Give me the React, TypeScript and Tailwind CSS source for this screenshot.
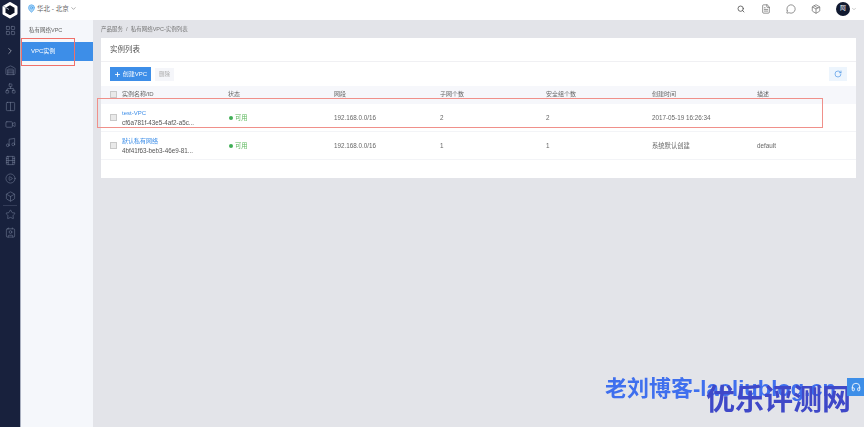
import { Box, ChevronDown, ChevronRight, CirclePlay, Contact, FileText, Headphones, LayoutGrid, MapPin, MessageCircle, Music, Network, Package, Plus, RotateCw, Search, Star, Video, Warehouse, Columns2, Film } from 'lucide-react';

const sans = 'font-["Liberation_Sans","Noto_Sans_CJK_SC",sans-serif]';

const navIcons = [Warehouse, Network, Columns2, Video, Music, Film, CirclePlay, Box];

const rows = [
  { name: 'test-VPC', id: 'cf6a781f-43e5-4af2-a5c...', net: '192.168.0.0/16', subnet: '2', sg: '2', time: '2017-05-19 16:26:34', desc: '' },
  { name: '默认私有网络', id: '4bf41f63-beb3-46e9-81...', net: '192.168.0.0/16', subnet: '1', sg: '1', time: '系统默认创建', desc: 'default' },
];

const gridCols = 'grid grid-cols-[12px_106px_106px_106px_106px_106px_105px_1fr] items-center';

function Logo() {
  return (
    <svg viewBox="0 0 20 20" className="w-5 h-5">
      <path d="M10 3.5 L16 7 V13.5 L10 17 L4 13.5 V7 Z" fill="#0c1224" stroke="#ffffff" strokeWidth="3" strokeLinejoin="round" />
      <path d="M3 6 L9 9.5" stroke="#aab0bf" strokeWidth="1" />
    </svg>
  );
}

function Check() {
  return <div className="w-[7px] h-[7px] border border-[#c9c9c9] bg-[#e9e9e9]" />;
}

export default function App() {
  return (
    <div className={`relative flex w-[864px] h-[427px] overflow-hidden bg-[#e3e4e9] ${sans}`}>
      {/* 왼쪽 아이콘 바 */}
      <aside className="w-[21px] shrink-0 bg-[#18213d] border-r border-[#aab0c0] flex flex-col items-center text-[#76809a] blur-[0.3px]">
        <div className="h-5 flex items-center justify-center"><Logo /></div>
        <div className="mt-[5px] h-[10px] flex items-center"><LayoutGrid size={11} strokeWidth={1.2} /></div>
        <div className="mt-[11px] h-[10px] flex items-center text-[#c5cad6]"><ChevronRight size={10} strokeWidth={1.5} /></div>
        <div className="mt-[1px] flex flex-col">
          {navIcons.map((Icon, i) => (
            <div key={i} className="mt-2 h-[10px] flex items-center"><Icon size={11} strokeWidth={1.2} /></div>
          ))}
        </div>
        <div className="w-[14px] h-px bg-[#343d59] mt-1" />
        <div className="mt-[3px] h-[10px] flex items-center"><Star size={11} strokeWidth={1.2} /></div>
        <div className="mt-2 h-[10px] flex items-center"><Contact size={11} strokeWidth={1.2} /></div>
      </aside>

      <div className="flex-1 flex flex-col min-w-0 blur-[0.3px]">
        {/* 상단 바 */}
        <header className="h-5 shrink-0 bg-white flex items-center pl-[6px] pr-[7px] pb-[3px]">
          <MapPin size={9} className="text-[#3d9be9] fill-[#a8d4f7]" strokeWidth={1.5} />
          <span className="ml-[1px] text-[6.5px] text-[#666]">华北 - 北京</span>
          <ChevronDown size={7} className="ml-[1px] text-[#777]" />
          <div className="ml-auto flex items-center text-[#555]">
            <Search size={8} strokeWidth={2.5} />
            <FileText size={10} strokeWidth={1.5} className="ml-[16px]" />
            <MessageCircle size={10} strokeWidth={1.5} className="ml-[15px]" />
            <Package size={10} strokeWidth={1.5} className="ml-[15px]" />
            <div className="ml-[15px] w-[14px] h-[14px] rounded-full bg-[#111a30] text-white text-[6px] flex items-center justify-center">阿</div>
            <ChevronDown size={6} className="ml-[1px] text-[#999]" />
          </div>
        </header>

        <div className="flex-1 flex min-h-0">
          {/* 서브 메뉴 */}
          <nav className="w-[72px] shrink-0 bg-[#f5f7fb] pt-[2px] flex flex-col">
            <div className="h-5 pl-2 pb-1 flex items-center text-[5.5px] text-[#666]">私有网络VPC</div>
            <div className="h-[19px] pl-[10px] flex items-center text-[6px] text-white bg-[#3d8ee8]">VPC实例</div>
          </nav>

          <main className="flex-1 pl-2 pr-2 min-w-0">
            <div className="h-[18px] flex items-center text-[5.5px] text-[#777]">产品服务&nbsp;&nbsp;/&nbsp;&nbsp;私有网络VPC-实例列表</div>
            <section className="bg-white h-[140px] flex flex-col">
              <div className="h-6 shrink-0 pl-[9px] flex items-center text-[7.5px] text-[#555] border-b border-[#f0f0f3]">实例列表</div>
              <div className="h-6 shrink-0 px-[9px] flex items-center">
                <button className="w-[41px] h-[14px] bg-[#3d8ee8] text-white text-[6px] flex items-center justify-center gap-[2px]">
                  <Plus size={7} strokeWidth={3} />创建VPC
                </button>
                <button className="ml-1 w-[19px] h-[13px] bg-[#f5f6fa] text-[#aaa] text-[5.5px]">删除</button>
                <button className="ml-auto w-[18px] h-[14px] bg-[#edf5fd] text-[#4a94e6] flex items-center justify-center">
                  <RotateCw size={8} strokeWidth={2} />
                </button>
              </div>
              <div className={`${gridCols} h-[18px] shrink-0 pl-[9px] pb-[2px] bg-[#f6f7fb] text-[6px] text-[#666]`}>
                <Check />
                <span>实例名称/ID</span>
                <span>状态</span>
                <span>网段</span>
                <span>子网个数</span>
                <span>安全组个数</span>
                <span>创建时间</span>
                <span>描述</span>
              </div>
              {rows.map((r) => (
                <div key={r.name} className={`${gridCols} h-[28px] shrink-0 pl-[9px] border-b border-[#f3f4f7] text-[6.3px] text-[#666]`}>
                  <Check />
                  <div className="flex flex-col gap-[2px] leading-[8px]">
                    <span className="text-[#3d8ee8] text-[6px]">{r.name}</span>
                    <span className="text-[#555]">{r.id}</span>
                  </div>
                  <span className="flex items-center gap-[2px] pl-[1px] text-[#5cb85c]">
                    <span className="w-1 h-1 rounded-full bg-[#3fae55]" />可用
                  </span>
                  <span>{r.net}</span>
                  <span>{r.subnet}</span>
                  <span>{r.sg}</span>
                  <span>{r.time}</span>
                  <span>{r.desc}</span>
                </div>
              ))}
            </section>
          </main>
        </div>
      </div>

      {/* 빨간 표시 박스 */}
      <div className="absolute left-[21px] top-[38px] w-[54px] h-[28px] border border-[#f0706a]" />
      <div className="absolute left-[97px] top-[98px] w-[726px] h-[30px] border border-[#f0908a]" />

      {/* 워터마크 */}
      <div className="absolute left-[605px] top-[375px] text-[22px] leading-[28px] font-bold text-[#3f6fee] whitespace-nowrap">老刘博客-laoliublog.cn</div>
      <div className="absolute left-[706px] top-[382px] text-[29px] leading-[36px] font-bold text-[#3f48c8] whitespace-nowrap">优乐评测网</div>
      <div className="absolute left-[847px] top-[378px] w-[17px] h-[18px] bg-[#3d8ee8] text-white flex items-center justify-center">
        <Headphones size={10} />
      </div>
    </div>
  );
}
